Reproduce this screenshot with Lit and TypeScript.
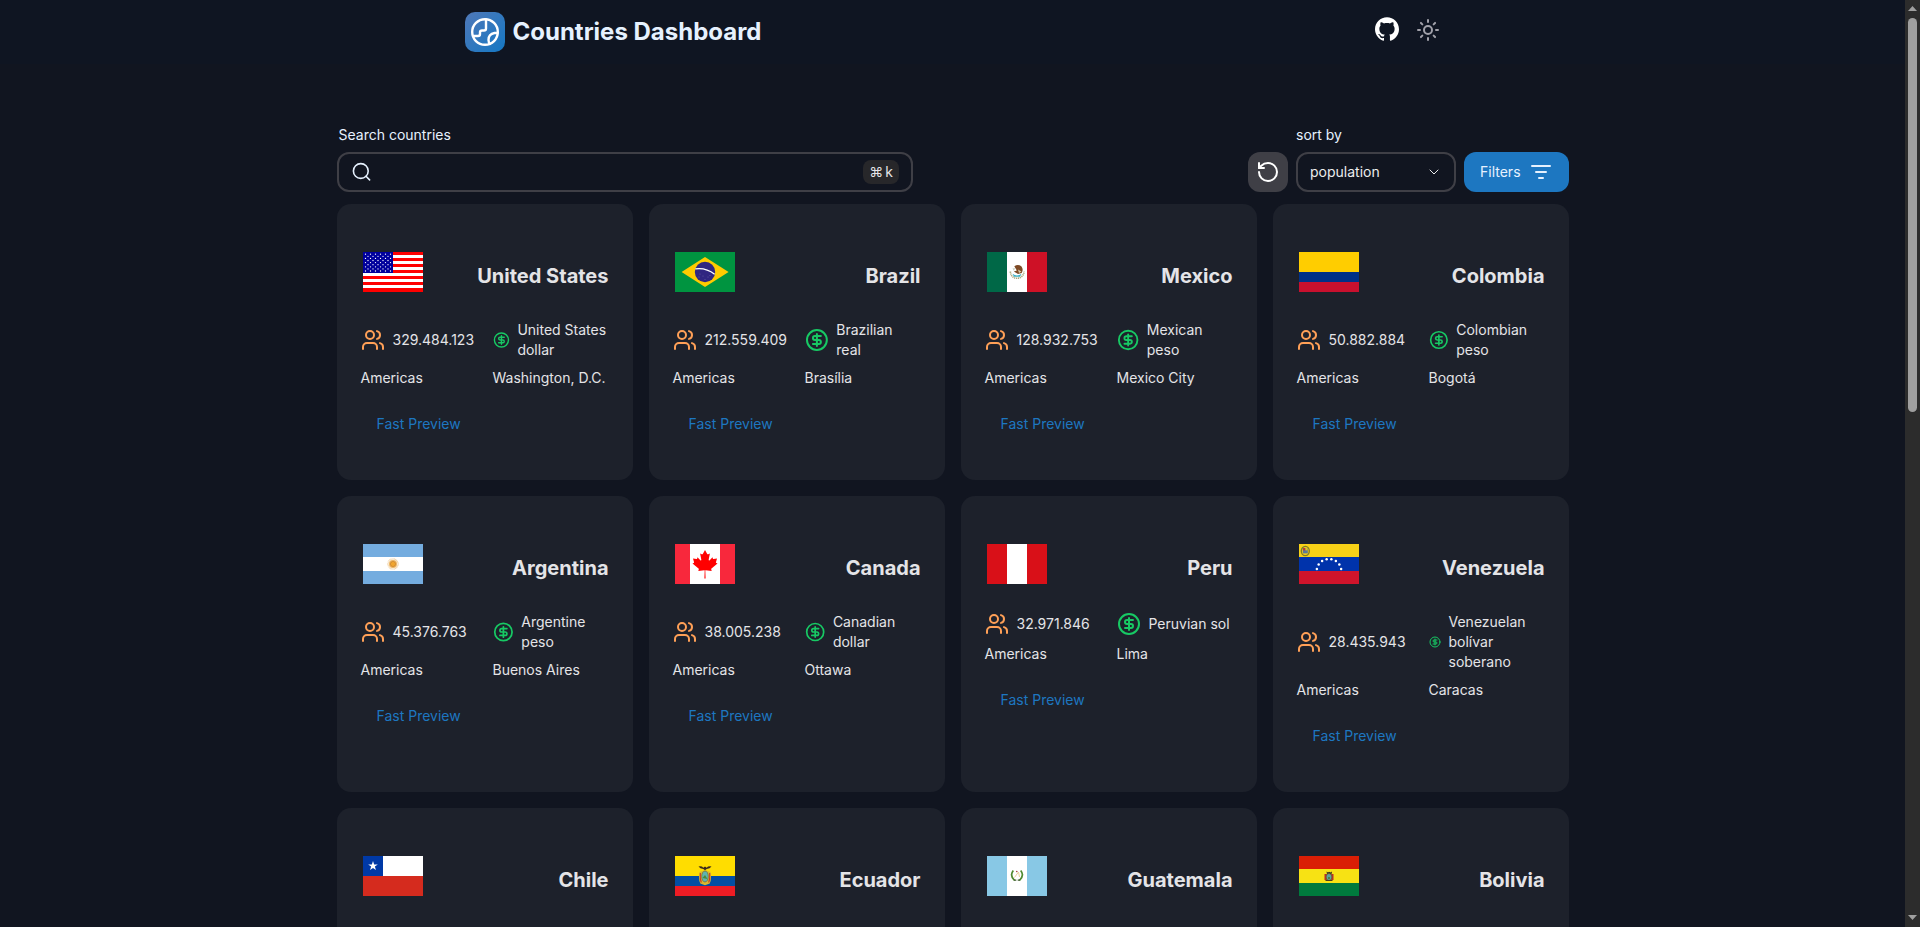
import { LitElement, html, css, svg, nothing } from "lit";
import { customElement, property } from "lit/decorators.js";

interface Facts {
  population: string;
  currency: string;
  capital: string;
}

interface Country {
  name: string;
  facts?: Facts;
}

const COUNTRIES: Country[] = [
  { name: "United States", facts: { population: "329.484.123", currency: "United States dollar", capital: "Washington, D.C." } },
  { name: "Brazil", facts: { population: "212.559.409", currency: "Brazilian real", capital: "Brasília" } },
  { name: "Mexico", facts: { population: "128.932.753", currency: "Mexican peso", capital: "Mexico City" } },
  { name: "Colombia", facts: { population: "50.882.884", currency: "Colombian peso", capital: "Bogotá" } },
  { name: "Argentina", facts: { population: "45.376.763", currency: "Argentine peso", capital: "Buenos Aires" } },
  { name: "Canada", facts: { population: "38.005.238", currency: "Canadian dollar", capital: "Ottawa" } },
  { name: "Peru", facts: { population: "32.971.846", currency: "Peruvian sol", capital: "Lima" } },
  { name: "Venezuela", facts: { population: "28.435.943", currency: "Venezuelan bolívar soberano", capital: "Caracas" } },
  { name: "Chile" },
  { name: "Ecuador" },
  { name: "Guatemala" },
  { name: "Bolivia" },
];

const r = (x: number, y: number, w: number, h: number, fill: string) =>
  svg`<rect x=${x} y=${y} width=${w} height=${h} fill=${fill} />`;

const FLAGS: Record<string, () => unknown> = {
  "United States": () => svg`
    ${r(0, 0, 60, 40, "#fff")}
    ${[0, 6, 12, 18, 24, 30, 36].map((y) => r(0, y, 60, y === 36 ? 4 : 3, "#f00"))}
    ${r(0, 0, 30, 21, "#00009c")}
    ${[0, 1, 2, 3, 4, 5, 6, 7, 8].map((row) =>
      Array.from({ length: row % 2 ? 5 : 6 }, (_, i) =>
        svg`<circle cx=${(row % 2 ? 5 : 2.5) + i * 5} cy=${2.2 + row * 2.1} r="0.65" fill="#fff" />`))}`,
  Brazil: () => svg`
    ${r(0, 0, 60, 40, "#009440")}
    <path d="M6.6 20 30 5 53.6 20 30 35Z" fill="#ffcb00" />
    <circle cx="30" cy="20" r="10.2" fill="#302681" />
    <path d="M20.3 16.9Q31 15.4 39.6 22.3" fill="none" stroke="#fff" stroke-width="1.3" />
    <g fill="#8d88c0"><circle cx="25" cy="22" r=".4" /><circle cx="28" cy="24" r=".4" /><circle cx="33" cy="25" r=".4" /><circle cx="30" cy="27.5" r=".4" /><circle cx="35" cy="23.5" r=".4" /><circle cx="24" cy="25" r=".4" /></g>`,
  Mexico: () => svg`
    ${r(0, 0, 20, 40, "#006847")}${r(20, 0, 20, 40, "#fff")}${r(40, 0, 20, 40, "#ce1126")}
    <path d="M23.4 19.5C23.4 28.5 36.6 28.5 37 19.5" fill="none" stroke="#a9a77a" stroke-width="1.6" stroke-dasharray="1.2 .7" />
    <path d="M25.5 21.8Q30 25.2 34.5 21.8L33 24.8H27Z" fill="#3aaec2" />
    <path d="M27.3 14.3Q31 11.6 34.3 14.3Q36.8 17.5 34.7 21L31 22L26.8 19.5L29.8 18.6Z" fill="#7d4a24" />
    <path d="M31 17.5 34.5 19.5 32 21Z" fill="#d9c8a8" /><path d="M25.5 16.5 28 16 27 19Z" fill="#c9cfc0" />`,
  Colombia: () => svg`${r(0, 0, 60, 20, "#ffcd00")}${r(0, 20, 60, 10, "#003087")}${r(0, 30, 60, 10, "#c8102e")}`,
  Argentina: () => svg`
    ${r(0, 0, 60, 13, "#74acdf")}${r(0, 13, 60, 14, "#fff")}${r(0, 27, 60, 13, "#74acdf")}
    <circle cx="30" cy="20" r="5" fill="none" stroke="#f0cf9f" stroke-width="1.6" stroke-dasharray=".7 .5" />
    <circle cx="30" cy="20" r="4" fill="#edb562" /><circle cx="30" cy="20" r="2.6" fill="#f0a52f" stroke="#b9752a" stroke-width=".5" />`,
  Canada: () => svg`
    ${r(0, 0, 15, 40, "#f8283c")}${r(15, 0, 30, 40, "#fff")}${r(45, 0, 15, 40, "#f8283c")}
    <path d="M30 6l-2.2 4c-.3.5-.7.4-1.1.2l-1.6-.8 1.2 6.2c.2 1.1-.6 1.1-1 .6l-2.8-3-.4 1.5c-.1.2-.3.4-.6.4l-3.5-.7.9 3.3c.2.7.4 1.1-.2 1.3l-1.2.6 6 4.8c.3.2.4.5.3.9l-.5 1.7 6-.8c.2 0 .4.1.4.4L29.4 34.5h1.2L30.3 26.6c0-.3.2-.4.4-.4l6 .8-.5-1.7c-.1-.4 0-.7.3-.9l6-4.8-1.2-.6c-.6-.2-.4-.6-.2-1.3l.9-3.3-3.5.7c-.3 0-.5-.2-.6-.4l-.4-1.5-2.8 3c-.4.5-1.2.5-1-.6l1.2-6.2-1.6.8c-.4.2-.8.3-1.1-.2Z" fill="#f00" />`,
  Peru: () => svg`${r(0, 0, 20, 40, "#d91018")}${r(20, 0, 20, 40, "#fff")}${r(40, 0, 20, 40, "#d91018")}`,
  Venezuela: () => svg`
    ${r(0, 0, 60, 13, "#f7d117")}${r(0, 13, 60, 14, "#0033ab")}${r(0, 27, 60, 13, "#cf142b")}
    <ellipse cx="6.3" cy="7" rx="4" ry="4.6" fill="none" stroke="#7c7a2b" stroke-width="1.3" />
    ${r(3.8, 4.2, 5, 5.2, "#5a7a9a")}${r(4.2, 4, 2, 2.4, "#c8322b")}${r(6.5, 4, 2, 2.4, "#e8c21b")}
    ${[-80, -57, -34, -11, 11, 34, 57, 80].map((a) => {
      const t = (a * Math.PI) / 180;
      return svg`<circle cx=${30 + 12.3 * Math.sin(t)} cy=${27.2 - 12.3 * Math.cos(t)} r="1.25" fill="#fff" />`;
    })}`,
  Chile: () => svg`
    ${r(0, 0, 60, 20, "#fff")}${r(0, 0, 20, 20, "#0039a6")}${r(0, 20, 60, 20, "#d52b1e")}
    <path d="M10 5l1.15 3.45h3.65l-2.95 2.15 1.12 3.5L10 11.95 7.03 14.1l1.12-3.5L5.2 8.45h3.65Z" fill="#fff" />`,
  Ecuador: () => svg`
    ${r(0, 0, 60, 20, "#fd0")}${r(0, 20, 60, 10, "#034ea2")}${r(0, 30, 60, 10, "#ed1c24")}
    <path d="M23.5 10.5q3.5-.6 4.8 1.3l1.7-1.2 1.7 1.2q1.3-1.9 4.8-1.3-1.5 2.3-4.8 2.5l-1.7 1.2-1.7-1.2q-3.3-.2-4.8-2.5Z" fill="#3a2a1c" />
    <path d="M24.5 16q-1.5 7 .8 11.5l4.7 1.7 4.7-1.7q2.3-4.5.8-11.5l-5.5-2Z" fill="#d9b92e" />
    <path d="M25.3 17q-.5 6 1 9.5M34.7 17q.5 6-1 9.5" stroke="#c4352c" stroke-width="1.1" fill="none" />
    <ellipse cx="30" cy="20.5" rx="3.3" ry="5.5" fill="#5fb3b0" stroke="#6a5a2c" stroke-width=".6" /><path d="M27.5 22 30 19l2.5 4Z" fill="#4b8a3a" />`,
  Guatemala: () => svg`
    ${r(0, 0, 20, 40, "#88c8e5")}${r(20, 0, 20, 40, "#fff")}${r(40, 0, 20, 40, "#88c8e5")}
    <path d="M26.3 14.5q-4 5 1.2 10M33.7 14.5q4 5-1.2 10" fill="none" stroke="#4f8a30" stroke-width="1.7" />
    <path d="M27 24.2h2.3M30.7 24.2h2.3" stroke="#3d5a2a" stroke-width="1.2" /><path d="M27.5 21.5l4-5.5 1 5" fill="none" stroke="#e8cf9a" stroke-width="1" /><circle cx="29.8" cy="15.5" r=".8" fill="#a33a3a" />`,
  Bolivia: () => svg`
    ${r(0, 0, 60, 13, "#da1e05")}${r(0, 13, 60, 14, "#f7e214")}${r(0, 27, 60, 13, "#007a3d")}
    <path d="M27.5 15.5l1.5 1 1-.8 1.5.8 1.5-1-.5 2.5h-4.5Z" fill="#2c2a20" />
    ${r(25.5, 18, 9, 6, "#b5302a")}<ellipse cx="30" cy="21" rx="2.9" ry="3.5" fill="#5aa5a0" stroke="#7a5a1c" stroke-width=".8" /><circle cx="30" cy="22" r="1" fill="#4a7a2a" />
    <path d="M26.5 24.5h7" stroke="#4a3a1c" stroke-width="1" />`,
};

@customElement("country-card")
export class CountryCard extends LitElement {
  @property({ attribute: false }) country!: Country;

  static styles = css`
    :host {
      display: block;
      box-sizing: border-box;
      min-height: 276px;
      background: #1d212b;
      border-radius: 14px;
      padding: 48px 24px 36px;
      color: #e4e4e7;
      font-size: 14px;
      line-height: 20px;
    }
    .head {
      display: flex;
      justify-content: space-between;
      align-items: flex-start;
      height: 68px;
    }
    .flag {
      width: 60px;
      height: 40px;
      margin-left: 2.5px;
      flex: none;
    }
    .name {
      margin: 10px 0 0;
      font-size: 20px;
      line-height: 28px;
      font-weight: 700;
    }
    .facts {
      display: grid;
      grid-template-columns: 1fr 1fr;
      gap: 8px 16px;
    }
    .fact {
      display: flex;
      align-items: center;
      gap: 8px;
      min-width: 0;
    }
    .icon {
      width: 24px;
      height: 24px;
      margin: 0 -0.5px 0 0.5px;
      fill: none;
      stroke: currentColor;
      stroke-width: 2;
      stroke-linecap: round;
      stroke-linejoin: round;
    }
    .people { color: #ffa057; }
    .money { color: #17c964; }
    .preview {
      display: inline-flex;
      align-items: center;
      height: 40px;
      margin-top: 16px;
      padding: 0 16px;
      border: 0;
      background: none;
      color: #1d77c1;
      font: inherit;
    }
  `;

  private renderFacts(f: Facts) {
    return html`
      <div class="facts">
        <div class="fact">
          <svg class="icon people" viewBox="0 0 24 24">
            <path d="M16 21v-2a4 4 0 0 0-4-4H6a4 4 0 0 0-4 4v2" />
            <circle cx="9" cy="7" r="4" />
            <path d="M22 21v-2a4 4 0 0 0-3-3.87" />
            <path d="M16 3.13a4 4 0 0 1 0 7.75" />
          </svg>
          <span>${f.population}</span>
        </div>
        <div class="fact">
          <svg class="icon money" viewBox="0 0 24 24">
            <circle cx="12" cy="12" r="10" />
            <path d="M16 8h-6a2 2 0 1 0 0 4h4a2 2 0 1 1 0 4H8" />
            <path d="M12 18V6" />
          </svg>
          <span>${f.currency}</span>
        </div>
        <span>Americas</span>
        <span>${f.capital}</span>
      </div>
      <button class="preview">Fast Preview</button>
    `;
  }

  render() {
    const c = this.country;
    return html`
      <div class="head">
        <svg class="flag" viewBox="0 0 60 40">${FLAGS[c.name]()}</svg>
        <h2 class="name">${c.name}</h2>
      </div>
      ${c.facts ? this.renderFacts(c.facts) : nothing}
    `;
  }
}

@customElement("app-root")
export class AppRoot extends LitElement {
  static styles = css`
    :host {
      display: flex;
      height: 927px;
      overflow: hidden;
      background: #111520;
      color: #e6f1fe;
      font-family: Inter, "Noto Sans", sans-serif;
      font-size: 14px;
      line-height: 20px;
    }
    * { box-sizing: border-box; }
    .page { flex: 1; min-width: 0; }
    .header {
      height: 64px;
      background: #0f1522;
    }
    .bar {
      display: flex;
      align-items: center;
      justify-content: space-between;
      width: 1023px;
      height: 64px;
      margin: 0 auto;
      padding: 0 24px;
    }
    .brand { display: flex; align-items: center; gap: 8px; }
    .logo {
      display: flex;
      align-items: center;
      justify-content: center;
      width: 40px;
      height: 40px;
      border-radius: 10px;
      background: linear-gradient(135deg, #5078b8, #1478c4);
      color: #fff;
    }
    .title { margin: 0 0 0 -0.5px; font-size: 24px; line-height: 32px; font-weight: 700; }
    .links { display: flex; align-items: center; gap: 17px; padding-bottom: 4px; }
    .line {
      display: block;
      flex: none;
      fill: none;
      stroke: currentColor;
      stroke-width: 2;
      stroke-linecap: round;
      stroke-linejoin: round;
    }
    .github { display: block; fill: #fff; margin-top: -2px; }
    .sun { color: #a1a1aa; }
    .main { width: 1232px; margin: 61px auto 0; }
    .toolbar {
      display: flex;
      align-items: flex-end;
      gap: 8px;
      margin: 0 -0.5px 12px 0.5px;
    }
    .field { display: flex; flex-direction: column; gap: 7px; }
    .search { width: 576px; margin-right: auto; }
    .search .label { padding-left: 1.5px; }
    .box {
      display: flex;
      align-items: center;
      justify-content: space-between;
      height: 40px;
      padding: 0 12px;
      border: 2px solid #3f3f46;
      border-radius: 12px;
    }
    .kbd {
      display: flex;
      align-items: center;
      gap: 2px;
      height: 24px;
      padding: 0 6px;
      border-radius: 8px;
      background: #27272a;
      color: #e4e4e7;
    }
    .select { width: 160px; }
    .value { color: #ecedee; }
    .chevron { stroke-width: 1.5; color: #ecedee; }
    .reset, .filters {
      display: flex;
      align-items: center;
      justify-content: center;
      height: 40px;
      border: 0;
      border-radius: 12px;
      color: #fff;
      font: inherit;
    }
    .reset { width: 40px; padding: 0; background: #3f3f46; }
    .filters { width: 105px; padding: 0 16px; justify-content: space-between; background: #1d77c1; color: #e6f1fe; }
    .grid {
      display: grid;
      grid-template-columns: repeat(4, 1fr);
      gap: 16px;
    }
    .scroll {
      display: flex;
      flex-direction: column;
      align-items: center;
      width: 15px;
      background: #2c2c2c;
      padding: 6px 0 7px;
    }
    .thumb {
      width: 9px;
      height: 394px;
      margin: 7px 0 auto;
      border-radius: 5px;
      background: #9f9f9f;
    }
    .tri { display: block; fill: #9f9f9f; }
  `;

  render() {
    return html`
      <div class="page">
        <header class="header">
          <div class="bar">
            <div class="brand">
              <span class="logo">
                <svg class="line" width="32" height="32" viewBox="0 0 32 32">
                  <circle cx="16" cy="16" r="12.8" stroke-width="2.4" />
                  <path d="M17 3.5v9q0 2-2 2h-2q-2 0-2 2v1.500q0 2-2 2H5" stroke-width="2.4" />
                  <path d="M28.5 17h-3q-6 1-6 7 0 2.500 1.500 4" stroke-width="2.4" />
                </svg>
              </span>
              <h1 class="title">Countries Dashboard</h1>
            </div>
            <div class="links">
              <svg class="github" width="24" height="24" viewBox="0 0 24 24">
                <path d="M12 .297c-6.63 0-12 5.373-12 12 0 5.303 3.438 9.8 8.205 11.385.6.113.82-.258.82-.577 0-.285-.01-1.04-.015-2.04-3.338.724-4.042-1.61-4.042-1.61C4.422 18.07 3.633 17.7 3.633 17.7c-1.087-.744.084-.729.084-.729 1.205.084 1.838 1.236 1.838 1.236 1.07 1.835 2.809 1.305 3.495.998.108-.776.417-1.305.76-1.605-2.665-.3-5.466-1.332-5.466-5.93 0-1.31.465-2.38 1.235-3.22-.135-.303-.54-1.523.105-3.176 0 0 1.005-.322 3.3 1.23.96-.267 1.98-.399 3-.405 1.02.006 2.04.138 3 .405 2.28-1.552 3.285-1.23 3.285-1.23.645 1.653.24 2.873.12 3.176.765.84 1.23 1.91 1.23 3.22 0 4.61-2.805 5.625-5.475 5.92.42.36.81 1.096.81 2.22 0 1.606-.015 2.896-.015 3.286 0 .315.21.69.825.57C20.565 22.092 24 17.592 24 12.297c0-6.627-5.373-12-12-12" />
              </svg>
              <svg class="line sun" width="24" height="24" viewBox="0 0 24 24">
                <circle cx="12" cy="12" r="4" />
                <path d="M12 2v2M12 20v2M4.93 4.93l1.41 1.41M17.66 17.66l1.41 1.41M2 12h2M20 12h2M6.34 17.66l-1.41 1.41M19.07 4.93l-1.41 1.41" />
              </svg>
            </div>
          </div>
        </header>
        <main class="main">
          <div class="toolbar">
            <div class="field search">
              <span class="label">Search countries</span>
              <div class="box">
                <svg class="line" width="20" height="20" viewBox="0 0 20 20">
                  <circle cx="9.8" cy="9" r="7.4" stroke-width="1.6" />
                  <path d="M15 14.3l3.6 3.6" stroke-width="1.6" />
                </svg>
                <span class="kbd"><span>⌘</span><span>k</span></span>
              </div>
            </div>
            <button class="reset">
              <svg class="line" width="24" height="24" viewBox="0 0 24 24">
                <path d="M3 12a9 9 0 1 0 9-9 9.75 9.75 0 0 0-6.74 2.74L3 8" />
                <path d="M3 3v5h5" />
              </svg>
            </button>
            <div class="field select">
              <span class="label">sort by</span>
              <div class="box">
                <span class="value">population</span>
                <svg class="line chevron" width="16" height="16" viewBox="0 0 24 24"><path d="m6 9 6 6 6-6" /></svg>
              </div>
            </div>
            <button class="filters">
              Filters
              <svg class="line" width="24" height="24" viewBox="0 0 24 24"><path d="M3 6h18M7 12h10M10 18h4" /></svg>
            </button>
          </div>
          <div class="grid">
            ${COUNTRIES.map((c) => html`<country-card .country=${c}></country-card>`)}
          </div>
        </main>
      </div>
      <div class="scroll">
        <svg class="tri" width="9" height="5" viewBox="0 0 9 5"><path d="M4.5 0 9 5H0Z" /></svg>
        <div class="thumb"></div>
        <svg class="tri" width="9" height="5" viewBox="0 0 9 5"><path d="M0 0h9L4.5 5Z" /></svg>
      </div>
    `;
  }
}
